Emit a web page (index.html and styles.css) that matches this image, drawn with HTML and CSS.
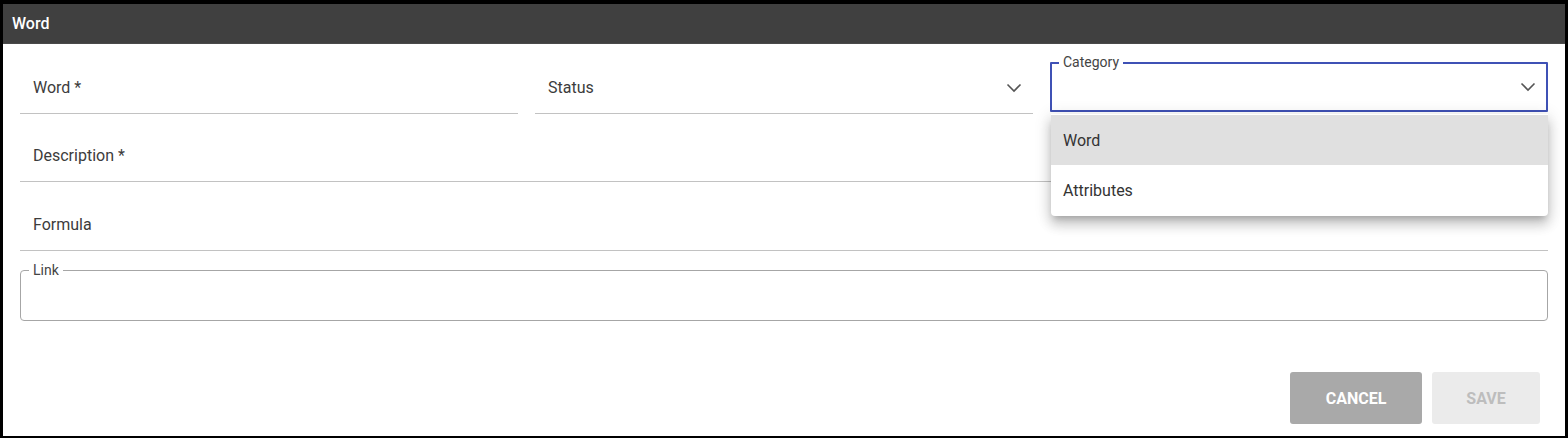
FILE: index.html
```html
<!DOCTYPE html>
<html>
<head>
<meta charset="utf-8">
<link rel="stylesheet" href="styles.css">
</head>
<body>
<div class="dialog">
  <div class="header">Word</div>
  <div class="form">
    <div class="row3">
      <div class="field"><span class="label">Word *</span></div>
      <div class="field"><span class="label">Status</span>
        <svg class="chev" width="16" height="10" viewBox="0 0 16 10"><polyline points="1.5,1.5 8,8 14.5,1.5" fill="none" stroke="#555" stroke-width="1.6"/></svg>
      </div>
      <div class="field-outlined">
        <div class="obox focused">
          <span class="legend">Category</span>
          <svg class="chev" width="16" height="10" viewBox="0 0 16 10"><polyline points="1.5,1.5 8,8 14.5,1.5" fill="none" stroke="#555" stroke-width="1.6"/></svg>
        </div>
      </div>
    </div>
    <div class="field full desc"><span class="label">Description *</span></div>
    <div class="field full formula"><span class="label">Formula</span></div>
    <div class="obox link"><span class="legend">Link</span></div>
    <div class="actions">
      <button class="btn cancel">Cancel</button>
      <button class="btn save">Save</button>
    </div>
  </div>
  <div class="menu">
    <div class="item active">Word</div>
    <div class="item">Attributes</div>
  </div>
</div>
</body>
</html>
```
FILE: styles.css
```css
html, body {
  margin: 0;
  height: 438px;
  overflow: hidden;
}
body {
  background: #000;
  padding: 4px 3px 0 3px;
  box-sizing: border-box;
  font-family: Roboto, "Liberation Sans", sans-serif;
}
.dialog {
  position: relative;
  background: #fff;
  height: 432px;
}
.header {
  height: 40px;
  background: #404040;
  border-bottom: 1px solid #4a4a4a;
  box-sizing: border-box;
  color: #fff;
  display: flex;
  align-items: center;
  padding-left: 9px;
  font-size: 16px;
  font-weight: 500;
}
.form {
  padding: 16px 17px 0 17px;
}
.row3 {
  display: grid;
  grid-template-columns: 1fr 1fr 1fr;
  column-gap: 17px;
}
.field {
  height: 54px;
  box-sizing: border-box;
  border-bottom: 1px solid #c2c2c2;
  display: flex;
  align-items: center;
  justify-content: space-between;
  padding: 2px 11px 0 13px;
}
.label {
  font-size: 16px;
  color: #3c3c3c;
}
.chev {
  display: block;
}
.field-outlined {
  height: 54px;
  padding-top: 2px;
  box-sizing: border-box;
}
.obox {
  position: relative;
  box-sizing: border-box;
  height: 50px;
  border: 1px solid #a6a6a6;
  border-radius: 4px;
}
.obox.focused {
  border: 2px solid #3f51b5;
  border-radius: 1px;
  display: flex;
  align-items: center;
  justify-content: flex-end;
  padding-right: 10px;
}
.legend {
  position: absolute;
  top: -9px;
  left: 8px;
  background: #fff;
  padding: 0 4px;
  font-size: 14px;
  line-height: 16px;
  color: #444;
}
.obox.focused .legend {
  left: 7px;
  top: -10px;
}
.desc {
  margin-top: 14px;
}
.formula {
  margin-top: 15px;
}
.link {
  margin-top: 19px;
  height: 51px;
}
.actions {
  margin-top: 51px;
  display: flex;
  justify-content: flex-end;
  gap: 10px;
  padding-right: 8px;
}
.btn {
  border: none;
  border-radius: 3px;
  height: 52px;
  font-family: Roboto, "Liberation Sans", sans-serif;
  font-size: 16px;
  font-weight: 700;
  text-transform: uppercase;
  padding: 0;
}
.cancel {
  width: 132px;
  background: #a9a9a9;
  color: #fff;
}
.save {
  width: 108px;
  background: #ebebeb;
  color: #bdbdbd;
}
.menu {
  position: absolute;
  top: 110px;
  left: 1048px;
  width: 497px;
  background: #fff;
  border-radius: 0 0 4px 4px;
  box-shadow: 0 5px 6px -3px rgba(0,0,0,0.2), 0 9px 12px 1px rgba(0,0,0,0.14), 0 3px 16px 2px rgba(0,0,0,0.12);
  padding: 1px 0 1px 0;
}
.item {
  height: 50px;
  display: flex;
  align-items: center;
  padding-left: 12px;
  font-size: 16px;
  color: #333;
}
.item.active {
  background: #e0e0e0;
}
```
